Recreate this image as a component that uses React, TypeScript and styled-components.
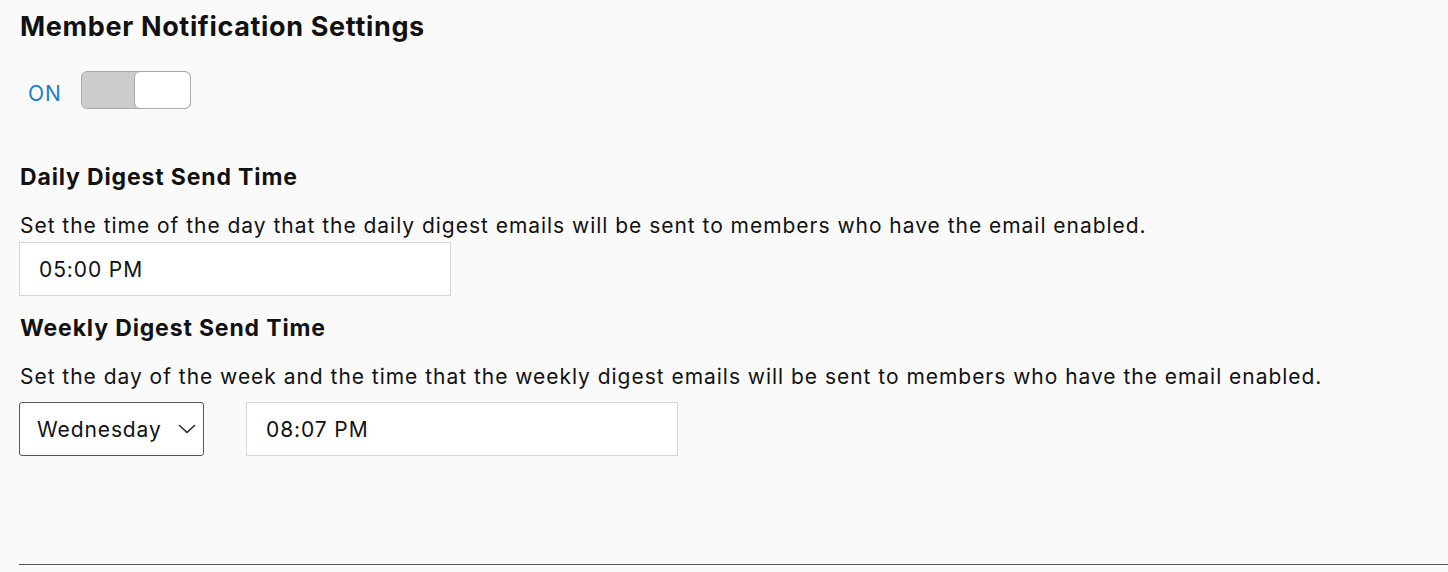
import React, { useState } from 'react';
import styled, { createGlobalStyle } from 'styled-components';

const GlobalStyle = createGlobalStyle`
  html, body {
    margin: 0;
    padding: 0;
    background: #fafafa;
  }
  body {
    font-family: 'Inter', 'Noto Sans', sans-serif;
    color: #111111;
  }
`;

const Page = styled.div`
  padding: 10px 0 0 20px;
  min-height: 572px;
  box-sizing: border-box;
  display: flex;
  flex-direction: column;
`;

const Title = styled.h2`
  margin: 0;
  font-family: 'Inter', 'Liberation Sans', sans-serif;
  font-weight: 700;
  font-size: 27px;
  line-height: 34px;
  letter-spacing: 0.65px;
  color: #111111;
`;

const ToggleRow = styled.div`
  display: flex;
  align-items: center;
  gap: 19px;
  margin-top: 27px;
  padding-left: 8px;
`;

const ToggleLabel = styled.span`
  font-size: 21px;
  letter-spacing: 1px;
  color: #1a80c2;
  padding-top: 7px;
`;

const Switch = styled.button<{ $on: boolean }>`
  width: 110px;
  height: 38px;
  padding: 0;
  border: 1px solid #a9a9a9;
  border-radius: 6px;
  background: #cccccc;
  display: flex;
  justify-content: ${({ $on }) => ($on ? 'flex-end' : 'flex-start')};
  cursor: pointer;
  box-sizing: border-box;
  overflow: hidden;
`;

const Knob = styled.span`
  width: 56px;
  height: 100%;
  background: #ffffff;
  border-left: 1px solid #a9a9a9;
  border-radius: 6px;
  box-sizing: border-box;
`;

const SectionTitle = styled.h3<{ $top: number }>`
  margin: ${({ $top }) => $top}px 0 0 0;
  font-family: 'Inter', 'Liberation Sans', sans-serif;
  font-weight: 700;
  font-size: 23px;
  line-height: 28px;
  letter-spacing: 0.85px;
  color: #111111;
`;

const Description = styled.p`
  margin: 23px 0 0 0;
  font-size: 21px;
  line-height: 24px;
  letter-spacing: 0.97px;
`;

const FieldRow = styled.div<{ $top: number }>`
  display: flex;
  align-items: center;
  gap: 42px;
  margin-top: ${({ $top }) => $top}px;
`;

const TimeInput = styled.input`
  width: 432px;
  height: 54px;
  box-sizing: border-box;
  padding: 0 0 0 19px;
  border: 1px solid #d6d6d6;
  background: #ffffff;
  font-family: 'Inter', 'Noto Sans', sans-serif;
  font-size: 21px;
  letter-spacing: 0.9px;
  color: #111111;
  outline: none;
  &:first-child {
    margin-left: -1px;
  }
`;

const SelectWrap = styled.div`
  position: relative;
  width: 185px;
  height: 54px;
  margin-left: -1px;
`;

const DaySelect = styled.select`
  appearance: none;
  width: 100%;
  height: 100%;
  box-sizing: border-box;
  padding: 0 0 0 17px;
  border: 1px solid #555555;
  border-radius: 3px;
  background: #ffffff;
  font-family: 'Inter', 'Noto Sans', sans-serif;
  font-size: 21px;
  letter-spacing: 0.9px;
  color: #111111;
  outline: none;
`;

const Chevron = styled.svg`
  position: absolute;
  right: 8px;
  top: 50%;
  transform: translateY(-50%);
  pointer-events: none;
`;

const Divider = styled.hr`
  margin: auto 0 7px -1px;
  border: none;
  border-top: 1px solid #555555;
  height: 0;
`;

const days = ['Sunday', 'Monday', 'Tuesday', 'Wednesday', 'Thursday', 'Friday', 'Saturday'];

const App = () => {
  const [enabled, setEnabled] = useState(true);
  const [day, setDay] = useState('Wednesday');
  const [dailyTime, setDailyTime] = useState('05:00 PM');
  const [weeklyTime, setWeeklyTime] = useState('08:07 PM');

  return (
    <>
      <GlobalStyle />
      <Page>
        <Title>Member Notification Settings</Title>
        <ToggleRow>
          <ToggleLabel>{enabled ? 'ON' : 'OFF'}</ToggleLabel>
          <Switch $on={enabled} onClick={() => setEnabled(v => !v)} aria-pressed={enabled}>
            <Knob />
          </Switch>
        </ToggleRow>

        <SectionTitle $top={54}>Daily Digest Send Time</SectionTitle>
        <Description>
          Set the time of the day that the daily digest emails will be sent to members who have the email enabled.
        </Description>
        <FieldRow $top={4}>
          <TimeInput value={dailyTime} onChange={e => setDailyTime(e.target.value)} />
        </FieldRow>

        <SectionTitle $top={18}>Weekly Digest Send Time</SectionTitle>
        <Description>
          Set the day of the week and the time that the weekly digest emails will be sent to members who have the email enabled.
        </Description>
        <FieldRow $top={13}>
          <SelectWrap>
            <DaySelect value={day} onChange={e => setDay(e.target.value)}>
              {days.map(d => (
                <option key={d} value={d}>
                  {d}
                </option>
              ))}
            </DaySelect>
            <Chevron width="18" height="10" viewBox="0 0 18 10" fill="none">
              <polyline points="1.5,1.5 9,8.5 16.5,1.5" stroke="#222222" strokeWidth="1.5" strokeLinecap="round" strokeLinejoin="round" />
            </Chevron>
          </SelectWrap>
          <TimeInput value={weeklyTime} onChange={e => setWeeklyTime(e.target.value)} />
        </FieldRow>

        <Divider />
      </Page>
    </>
  );
};

export default App;
